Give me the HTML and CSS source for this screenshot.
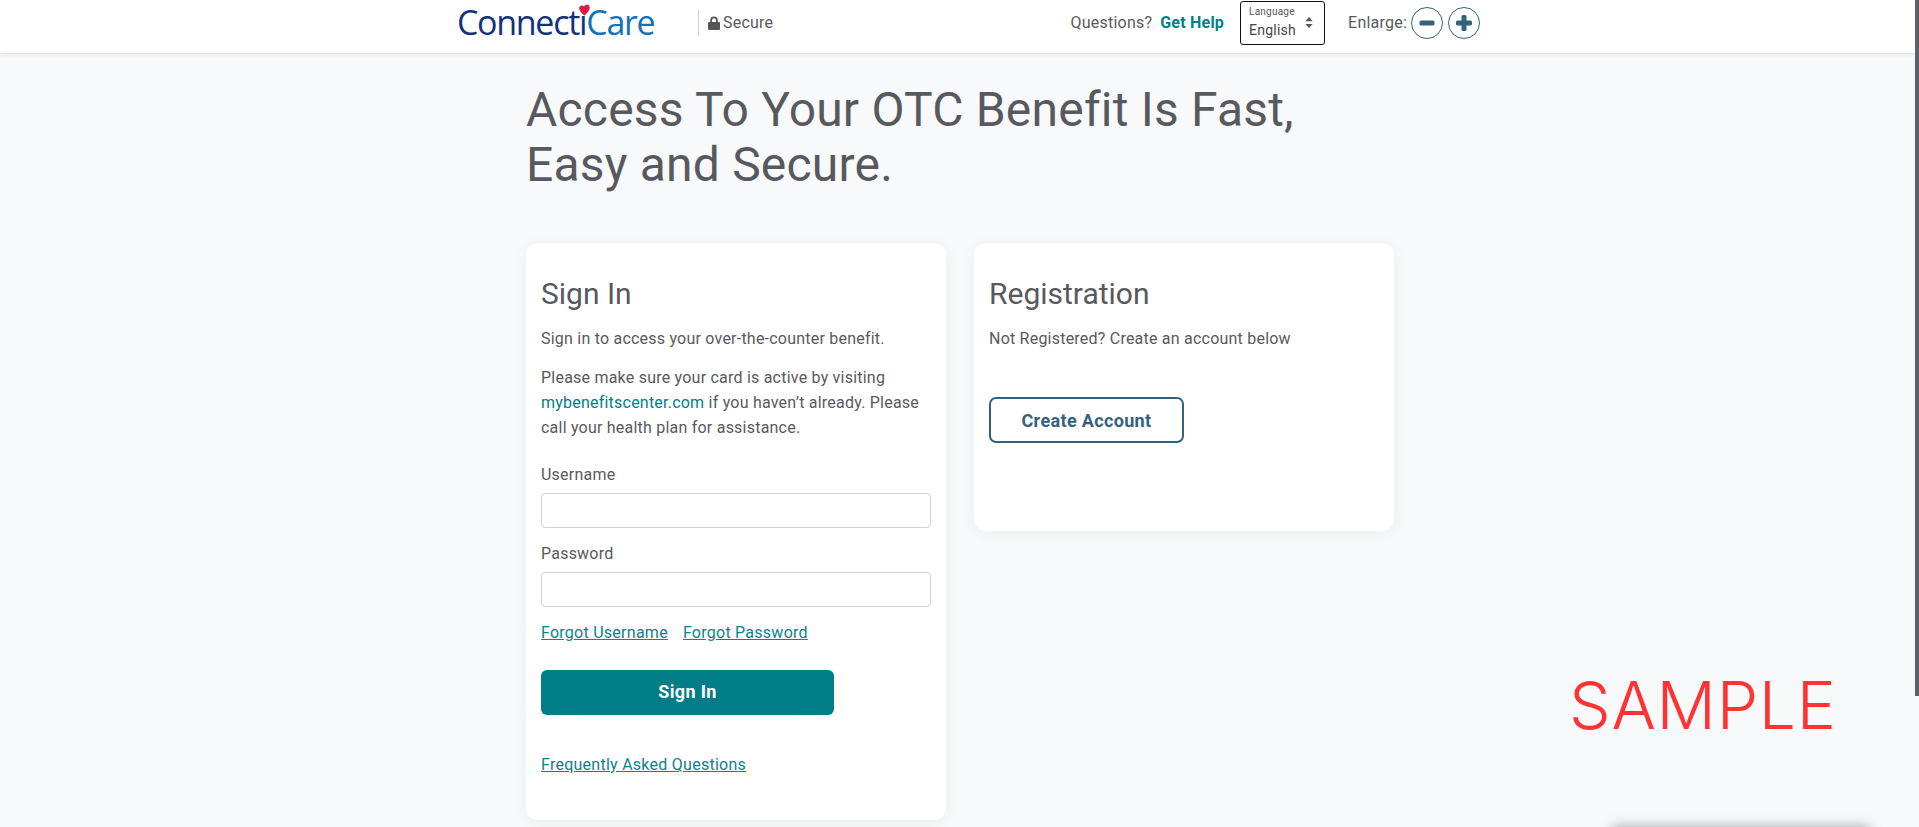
FILE: index.html
```html
<!DOCTYPE html>
<html lang="en">
<head>
<meta charset="utf-8">
<title>Access To Your OTC Benefit</title>
<link rel="stylesheet" href="styles.css">
</head>
<body>
<header class="topbar">
  <div class="topbar-inner">
    <div class="brand-group">
      <a class="logo" href="#"><span class="logo-dark">Connecti</span><span class="logo-light">Care</span>
        <svg class="logo-heart" viewBox="0 0 14 14" width="13" height="12"><path d="M7 13.500C3 10 .6 7.600 .8 4.400C1 1.800 4.600 .4 6.600 3C7.400 .6 11.600 .2 12.800 2.800C14 5.800 10.600 10 7 13.500Z" fill="#e4173e"/></svg>
      </a>
      <div class="secure">
        <svg class="lock" viewBox="0 0 12 14" width="12" height="14"><path d="M2.200 6V4.200a3.800 3.800 0 0 1 7.600 0V6h.7A1.300 1.300 0 0 1 12 7.300v5.400A1.300 1.300 0 0 1 10.500 14h-9A1.300 1.300 0 0 1 0 12.700V7.300A1.300 1.300 0 0 1 1.500 6ZM4 6h4V4.200a2 2 0 0 0-4 0Z" fill="#54565b"/></svg>
        <span>Secure</span>
      </div>
    </div>
    <div class="tools">
      <span class="questions">Questions?</span>
      <a class="help" href="#">Get Help</a>
      <div class="language">
        <div class="language-text">
          <span class="language-label">Language</span>
          <span class="language-value">English</span>
        </div>
        <svg class="updown" viewBox="0 0 8 12" width="8" height="11"><path d="M4 0 8 4.500H0ZM4 12 0 7.500H8Z" fill="#54565b"/></svg>
      </div>
      <span class="enlarge">Enlarge:</span>
      <button class="zoom-btn" type="button" aria-label="Decrease text size"><svg viewBox="0 0 32 32" width="32" height="32"><rect x="8.500" y="13.500" width="15" height="5" rx="1.500" fill="#33627f"/></svg></button>
      <button class="zoom-btn" type="button" aria-label="Increase text size"><svg viewBox="0 0 32 32" width="32" height="32"><path d="M13.500 9.500a1.500 1.500 0 0 1 1.500-1.500h2a1.500 1.500 0 0 1 1.500 1.500v4h4a1.500 1.500 0 0 1 1.500 1.500v2a1.500 1.500 0 0 1-1.500 1.500h-4v4a1.500 1.500 0 0 1-1.500 1.500h-2a1.500 1.500 0 0 1-1.500-1.500v-4h-4A1.500 1.500 0 0 1 8 17v-2a1.500 1.500 0 0 1 1.500-1.500h4Z" fill="#33627f"/></svg></button>
    </div>
  </div>
</header>

<main class="content">
  <h1 class="title">Access To Your OTC Benefit Is Fast, Easy and Secure.</h1>
  <div class="cards">
    <section class="card card-signin">
      <h2 class="card-title">Sign In</h2>
      <p class="text">Sign in to access your over-the-counter benefit.</p>
      <p class="text text-gap">Please make sure your card is active by visiting <a class="inline-link" href="#">mybenefitscenter.com</a> if you haven’t already. Please call your health plan for assistance.</p>
      <form class="form">
        <label class="field-label field-first" for="username">Username</label>
        <input class="input" id="username" type="text">
        <label class="field-label" for="password">Password</label>
        <input class="input" id="password" type="password">
        <div class="forgot">
          <a class="link" href="#">Forgot Username</a>
          <a class="link" href="#">Forgot Password</a>
        </div>
        <button class="primary" type="button">Sign In</button>
      </form>
      <a class="link faq" href="#">Frequently Asked Questions</a>
    </section>
    <section class="card card-register">
      <h2 class="card-title">Registration</h2>
      <p class="text">Not Registered? Create an account below</p>
      <button class="secondary" type="button">Create Account</button>
    </section>
  </div>
</main>

<div class="watermark">SAMPLE</div>
<div class="scrollbar"></div>
<div class="peek"></div>
</body>
</html>
```
FILE: styles.css
```css
* { box-sizing: border-box; }
html, body { margin: 0; height: 827px; overflow: hidden; }
body {
  position: relative;
  background: #f8f9fb;
  color: #58595e;
  font-family: Roboto, "Liberation Sans", sans-serif;
  font-size: 16px;
  letter-spacing: .22px;
}
.topbar {
  height: 53px;
  background: #fff;
  box-shadow: 0 1px 4px rgba(60, 64, 80, .16);
}
.topbar-inner {
  display: flex;
  justify-content: space-between;
  align-items: center;
  width: 1023px;
  height: 45px;
  margin-left: 457px;
}
.brand-group { display: flex; align-items: center; }
.logo {
  position: relative;
  display: block;
  width: 241px;
  font-family: "Open Sans", sans-serif;
  font-size: 34px;
  font-weight: 500;
  line-height: 45px;
  letter-spacing: -1.300px;
  text-decoration: none;
  white-space: nowrap;
}
.logo-dark { color: #12327c; }
.logo-light { color: #1272b8; }
.logo-heart { position: absolute; left: 121px; top: 4px; }
.secure {
  display: flex;
  align-items: center;
  gap: 3px;
  height: 26px;
  padding-left: 9px;
  border-left: 1px solid #cfd0d3;
  line-height: 26px;
}
.tools { display: flex; align-items: center; }
.questions { margin-right: 8px; }
.help { color: #008089; font-weight: 700; text-decoration: none; margin-right: 16px; }
.language {
  display: flex;
  align-items: center;
  justify-content: space-between;
  width: 85px;
  height: 44px;
  padding: 0 11px 0 8px;
  border: 1px solid #111;
  border-radius: 3px;
  background: #fff;
  margin-right: 23px;
}
.language-text { display: flex; flex-direction: column; }
.language-label { font-size: 10px; line-height: 12px; }
.language-value { font-size: 14px; line-height: 18px; margin-top: 3px; color: #44464b; }
.enlarge { margin-right: 4px; }
.zoom-btn {
  width: 32px;
  height: 32px;
  padding: 0;
  border: 1px solid #33627f;
  border-radius: 50%;
  background: #fff;
}
.zoom-btn svg { display: block; margin: -1px; }
.zoom-btn + .zoom-btn { margin-left: 5px; }
.content { padding: 29px 0 0 526px; }
.title {
  width: 800px;
  margin: 0;
  font-size: 48px;
  font-weight: 400;
  line-height: 55px;
  letter-spacing: .2px;
}
.cards { display: flex; align-items: flex-start; gap: 28px; margin-top: 51px; }
.card {
  width: 420px;
  padding: 31px 15px 0;
  background: #fff;
  border-radius: 12px;
  box-shadow: 0 2px 14px rgba(60, 64, 80, .07);
}
.card-signin { height: 577px; }
.card-register { height: 288px; }
.card-title { margin: 0; font-size: 30px; font-weight: 400; line-height: 40px; letter-spacing: 0; }
.text { margin: 12px 0 0; line-height: 25px; }
.text-gap { margin-top: 14px; }
.inline-link { color: #008089; text-decoration: none; }
.form { display: flex; flex-direction: column; align-items: flex-start; }
.field-label { margin-top: 13px; line-height: 25px; }
.field-first { margin-top: 22px; }
.input {
  width: 390px;
  height: 35px;
  margin-top: 6px;
  border: 1px solid #cfd2dc;
  border-radius: 4px;
  background: #fff;
}
.forgot { display: flex; gap: 15px; margin-top: 13px; line-height: 25px; letter-spacing: .26px; }
.link { color: #0d828b; text-decoration: underline; line-height: 25px; }
.primary {
  width: 293px;
  height: 45px;
  margin-top: 25px;
  padding: 0 0 3px;
  border: 0;
  border-radius: 6px;
  background: #007d87;
  color: #fff;
  font: 700 18px Roboto, sans-serif;
  letter-spacing: .35px;
}
.faq { display: inline-block; margin-top: 37px; letter-spacing: .26px; }
.secondary {
  display: block;
  width: 195px;
  height: 46px;
  margin-top: 46px;
  border: 2px solid #33627f;
  border-radius: 7px;
  background: #fff;
  color: #33627f;
  font: 700 18px Roboto, sans-serif;
  letter-spacing: .35px;
}
.watermark {
  position: absolute;
  left: 1569px;
  top: 665px;
  color: #ff3333;
  font-family: Inter, sans-serif;
  font-weight: 350;
  font-size: 66px;
  line-height: 80px;
  letter-spacing: .7px;
}
.scrollbar {
  position: absolute;
  right: 0;
  top: 0;
  width: 4px;
  height: 696px;
  background: #5f6066;
}
.peek {
  position: absolute;
  left: 1612px;
  top: 827px;
  width: 258px;
  height: 40px;
  background: #fff;
  box-shadow: 0 0 12px rgba(0, 0, 0, .35);
}
```
